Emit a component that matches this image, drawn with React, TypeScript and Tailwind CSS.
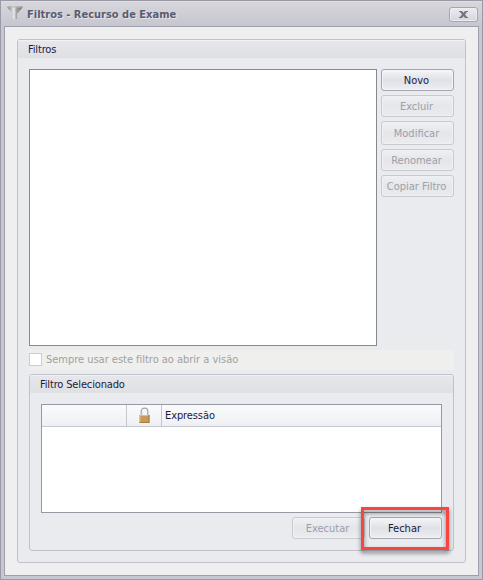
import type { ReactNode } from "react";

function Button({ text, disabled = false, tall = false }: { text: string; disabled?: boolean; tall?: boolean }) {
  return (
    <button
      disabled={disabled}
      className={`flex w-[73px] shrink-0 items-center justify-center whitespace-nowrap rounded-[3px] border pr-[2px] pt-[2px] leading-4 ${tall ? "h-6" : "h-[22px]"} ${
        disabled
          ? "border-[#c9cad0] bg-linear-to-b from-[#eff0f3] via-[#e5e6ea] to-[#ebecf0] text-[#9d9eaa] shadow-[inset_0_0_0_1px_#eff0f3]"
          : "border-[#a4a5b0] bg-linear-to-b from-[#f5f6f8] via-[#dfe1e7] to-[#eceef2] text-[#1e1a3c] shadow-[inset_0_0_0_1px_#f3f4f7]"
      }`}
    >
      {text}
    </button>
  );
}

function Group({ title, className, children }: { title: string; className: string; children: ReactNode }) {
  return (
    <section className={`flex flex-col rounded-[3px] border border-[#c1c2c9] bg-[#eaebef] ${className}`}>
      <header className="h-[18px] shrink-0 rounded-t-[2px] border-t border-[#f2f2f5] bg-linear-to-b from-[#e6e7eb] to-[#dfe0e4] pl-[10px] leading-[18px] tracking-[-0.15px] text-[#1e1a3c]">
        {title}
      </header>
      {children}
    </section>
  );
}

export default function App() {
  return (
    <main className="flex h-[580px] w-[483px] flex-col border border-[#9b99a6] bg-[#c7c7d1] px-[3px] pb-[3px] font-['DejaVu_Sans_Condensed','DejaVu_Sans',sans-serif] text-[11px]">
      <header className="-mx-[3px] flex h-[25px] shrink-0 items-center border-t border-[#dedee4] bg-linear-to-b from-[#d6d6dc] to-[#c6c6cf] pl-[6px] pr-[4px] text-[#5b5b70]">
        <svg width="16" height="16" viewBox="0 0 16 16" className="shrink-0">
          <defs>
            <linearGradient id="funnel">
              <stop offset="0" stopColor="#777979" />
              <stop offset=".42" stopColor="#e9ecec" />
              <stop offset=".6" stopColor="#a3a5a5" />
              <stop offset="1" stopColor="#6c6e70" />
            </linearGradient>
          </defs>
          <path d="M.5 .5h15v1L10 8v5H6V8L.5 1.5z" fill="url(#funnel)" />
          <path d="M1 1h14" stroke="#b6b9b9" />
        </svg>
        <h1 className="ml-[4px] whitespace-nowrap font-bold leading-4 pt-px [text-shadow:1px_1px_0_#e4e4ea]">Filtros - Recurso de Exame</h1>
        <button className="ml-auto flex h-[15px] w-[29px] items-center justify-center rounded-[3px] border border-[#a4a5b0] bg-linear-to-b from-[#ececf0] to-[#d5d6dc] shadow-[inset_0_0_0_1px_#eeeef2]">
          <svg width="9" height="7" viewBox="0 0 9 7">
            <path d="M0 0h3l1.5 1.7L6 0h3v1H8L6 3.5 8 6h1v1H6L4.5 5.3 3 7H0V6h1l2-2.5L1 1H0z" fill="#73748a" />
          </svg>
        </button>
      </header>

      <div className="flex grow flex-col border border-[#a09fae] bg-[#efefef] px-3 pt-3 pb-3">
        <Group title="Filtros" className="h-[524px] w-[449px]">
          <div className="flex px-[11px] pt-[11px]">
            <div className="h-[277px] w-[348px] shrink-0 border border-[#858994] bg-white" />
            <div className="ml-1 flex flex-col gap-1">
              <Button text="Novo" />
              <Button text="Excluir" disabled />
              <Button text="Modificar" disabled tall />
              <Button text="Renomear" disabled />
              <Button text="Copiar Filtro" disabled />
            </div>
          </div>

          <label className="mx-[11px] mt-1 flex h-5 shrink-0 items-start bg-[#efefee] pt-[3px] text-[#a1a19f]">
            <span className="size-[13px] border border-[#cccccc] bg-white" />
            <span className="ml-1 whitespace-nowrap leading-[14px] tracking-[-0.02px]">Sempre usar este filtro ao abrir a visão</span>
          </label>

          <Group title="Filtro Selecionado" className="mx-[11px] mt-1 h-[177px] shrink-0">
            <div className="mx-[11px] mt-[11px] h-[109px] w-[401px] shrink-0 border border-[#9898a5] bg-white">
              <div className="flex h-[22px] border-b border-[#c5c6cf] bg-linear-to-b from-[#f9fafb] to-[#eff0f3] text-[#1e1a3c]">
                <div className="w-[85px] border-r border-[#c5c6cf]" />
                <div className="flex w-[35px] justify-center border-r border-[#c5c6cf] pt-[2px]">
                  <svg width="11" height="17" viewBox="0 0 11 17">
                    <path d="M2.2 8V4.2C2.2 .2 8.8.2 8.8 4.2V8" stroke="#9fa3a4" strokeWidth="1.2" fill="none" />
                    <path d="M3.3 8V4.3" stroke="#dfe3e3" />
                    <path d="M.5 8h10v8H.5z" fill="#c99861" />
                    <path d="M.5 8.5h10M1 8v7" stroke="#dfbd88" />
                    <path d="M10 8v8M.5 15.5H10" stroke="#a77d30" />
                  </svg>
                </div>
                <span className="ml-[3px] mt-[3px] leading-4 tracking-[-0.1px]">Expressão</span>
              </div>
            </div>
            <div className="mt-1 flex justify-end gap-1 pr-[11px]">
              <Button text="Executar" disabled />
              <div className="relative">
                <Button text="Fechar" />
                <div className="pointer-events-none absolute -left-[8px] -top-[10px] h-[43px] w-[88px] border-[3px] border-[#fa4343] drop-shadow-[0_3px_2px_rgba(0,0,0,0.5)]" />
              </div>
            </div>
          </Group>
        </Group>
      </div>
    </main>
  );
}
